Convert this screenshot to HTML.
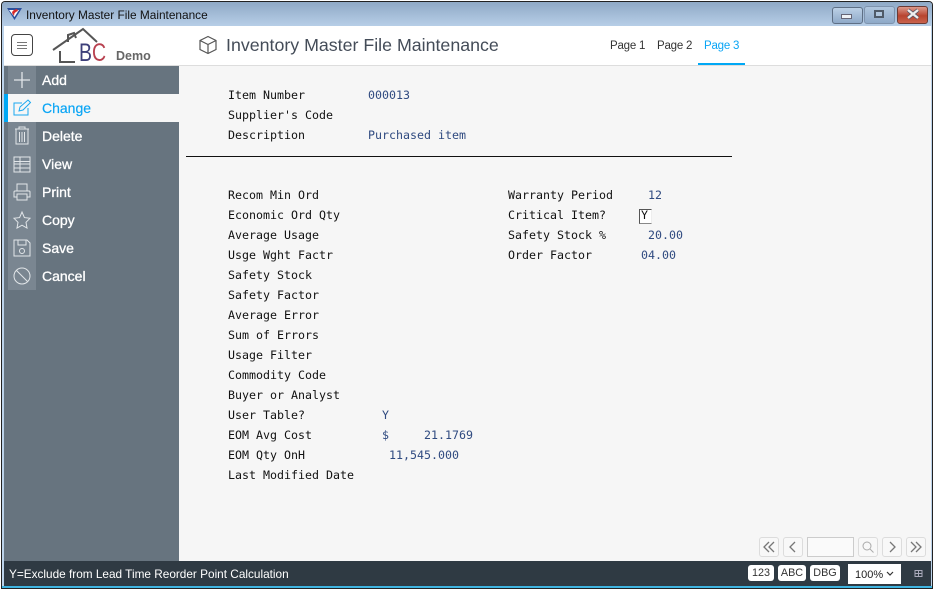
<!DOCTYPE html>
<html><head><meta charset="utf-8"><style>
html,body{margin:0;padding:0;width:935px;height:591px;overflow:hidden;background:#fff}
.a{position:absolute}
#win{position:absolute;left:0;top:0;width:935px;height:591px;font-family:"Liberation Sans",sans-serif}
.m{position:absolute;font:11.63px/14px "DejaVu Sans Mono",monospace;color:#111;white-space:pre}
.v{color:#2f4a80}
.n{position:absolute;left:42px;font:14px/16px "Liberation Sans",sans-serif;color:#fff;-webkit-text-stroke:.3px #fff}
.i{position:absolute;left:11px;width:22px;height:22px;fill:none;stroke:#e2e6e9;stroke-width:1}
.t{position:absolute;top:39px;font:11.5px/14px "Liberation Sans",sans-serif;letter-spacing:-.2px;color:#333}
.b{position:absolute;top:537px;width:18px;height:18px;border:1px solid #dcdcdc;border-radius:3px;background:#f8f8f8;box-sizing:content-box}
.b svg{position:absolute;left:0;top:0;width:18px;height:18px;fill:none;stroke:#777;stroke-width:1.3}
.k{position:absolute;top:565px;height:16px;background:#fff;border-radius:3px;font:10.8px/16px "Liberation Sans",sans-serif;color:#333;text-align:center}
</style></head><body><div id="win">
<div class="a" style="left:1px;top:1px;width:932px;height:588px;background:#222;border-radius:4px 4px 0 0"></div>
<div class="a" style="left:2px;top:2px;width:930px;height:586px;background:#bcd3ea;border-radius:3px 3px 0 0"></div>
<div class="a" style="left:2px;top:2px;width:930px;height:24px;background:linear-gradient(#8fa9c6,#b7cee7);border-radius:3px 3px 0 0"></div>
<svg class="a" style="left:7px;top:7px" width="15" height="14" viewBox="0 0 15 14"><path d="M0 1H15L7.500 13Z" fill="#2a4f9c"/><path d="M2 3H12L7.500 10Z" fill="#fff"/><path d="M10 2Q5 3 5 6L7 9Q7 5 11 4Z" fill="#d62a2a"/></svg>
<div class="a" style="left:26px;top:8px;font:11.85px/15px 'Liberation Sans',sans-serif;color:#111">Inventory Master File Maintenance</div>
<div class="a" style="left:832px;top:7px;width:29px;height:15px;border:1px solid #5e6f85;border-radius:3px;background:linear-gradient(#bcd0e6,#8ea9c8)"></div>
<div class="a" style="left:841px;top:14px;width:9px;height:3px;background:#eef2f6;border:1px solid #667"></div>
<div class="a" style="left:864px;top:6px;width:29px;height:16px;border:1px solid #7e93ad;border-radius:3px;background:linear-gradient(#b0c6de,#8ea9c8)"></div>
<div class="a" style="left:874px;top:10px;width:6px;height:4px;border:2px solid #4f5a68;background:#b0c6de"></div>
<div class="a" style="left:897px;top:6px;width:29px;height:16px;border:1px solid #6b3a34;border-radius:3px;background:linear-gradient(#dc9a8c,#b8442f 55%,#c9634d)"></div>
<svg class="a" style="left:905px;top:8px" width="16" height="12" viewBox="0 0 16 12"><path d="M3 2L13 10M13 2L3 10" stroke="#556" stroke-width="3.800"/><path d="M3 2L13 10M13 2L3 10" stroke="#eee" stroke-width="2.400"/></svg>

<div class="a" style="left:4px;top:26px;width:927px;height:39px;background:#fff;border-bottom:1px solid #ddd"></div>
<div class="a" style="left:11px;top:34px;width:20px;height:20px;border:1px solid #444;border-radius:4px;background:#fff"></div>
<div class="a" style="left:17px;top:42px;width:10px;height:1px;background:#777;box-shadow:0 3px #777,0 6px #777"></div>
<svg class="a" style="left:50px;top:26px" width="60" height="38" viewBox="0 0 60 38" fill="none"><path d="M3 24L33 3L47 16" stroke="#555" stroke-width="2"/><path d="M10 25V36H25" stroke="#555" stroke-width="2"/><path d="M18 16V9L24 7L26 12" stroke="#555" stroke-width="2"/></svg>
<div class="a" style="left:79px;top:40px;font:25px/26px 'Liberation Sans',sans-serif;color:#3d3f7a;transform:scaleX(.78);transform-origin:0 0">B<span style="color:#b8404f">C</span></div>
<div class="a" style="left:116px;top:49px;font:bold 12.5px/15px 'Liberation Sans',sans-serif;color:#666">Demo</div>
<svg class="a" style="left:198px;top:35px" width="20" height="20" viewBox="0 0 20 20" fill="none" stroke="#555" stroke-width="1.200"><path d="M10 1.500L18 5.500V14.500L10 18.500L2 14.500V5.500ZM2 5.500L10 9.500L18 5.500M10 9.500V18.500"/></svg>
<div class="a" style="left:226px;top:34px;font:17.8px/22px 'Liberation Sans',sans-serif;color:#444c58">Inventory Master File Maintenance</div>
<div class="t" style="left:610px">Page 1</div>
<div class="t" style="left:657px">Page 2</div>
<div class="t" style="left:704px;color:#0aa5f5">Page 3</div>
<div class="a" style="left:698px;top:63px;width:47px;height:2px;background:#00a8f5"></div>

<div class="a" style="left:179px;top:66px;width:752px;height:495px;background:#f6f6f6"></div>
<div class="a" style="left:4px;top:66px;width:175px;height:495px;background:#67747f"></div>
<div class="a" style="left:8px;top:66px;width:28px;height:224px;background:#7a8691"></div>
<div class="a" style="left:4px;top:94px;width:175px;height:28px;background:#f6f6f6"></div>
<div class="a" style="left:4px;top:94px;width:4px;height:28px;background:#00a8f5"></div>

<svg class="i" style="top:69px" viewBox="0 0 22 22"><path d="M11 3V19M3 11H19" stroke-width="1.300"/></svg>
<svg class="i" style="top:97px;stroke:#1ba8f0" viewBox="0 0 22 22"><path d="M17 11V18H3V6H11"/><path d="M8 14L9 10L17 3L19.500 5.500L12 13Z"/></svg>
<svg class="i" style="top:125px" viewBox="0 0 22 22"><path d="M4 4H18M8 4V2H14V4M5 4V19H17V4M8.500 7V17M11 7V17M13.500 7V17"/></svg>
<svg class="i" style="top:153px" viewBox="0 0 22 22"><path d="M3 4H19V19H3ZM3 8.500H19M3 11H19M3 15H19M9 4V19"/></svg>
<svg class="i" style="top:181px" viewBox="0 0 22 22"><path d="M6 10V3H16V10M6 16H3V11Q3 10 4 10H18Q19 10 19 11V16H16M6 13H16V19H6Z"/></svg>
<svg class="i" style="top:209px" viewBox="0 0 22 22"><path d="M11 3L13.400 8.600L19 9.300L15 13.300L16 19L11 16.200L6 19L7 13.300L3 9.300L8.600 8.600Z"/></svg>
<svg class="i" style="top:237px" viewBox="0 0 22 22"><path d="M3 3H16L19 6V19H3ZM7 3V8H15V3"/><circle cx="11" cy="14" r="2.500"/></svg>
<svg class="i" style="top:265px" viewBox="0 0 22 22"><circle cx="11" cy="11" r="8"/><path d="M5.500 5.500L16.500 16.500"/></svg>

<div class="n" style="top:72px">Add</div>
<div class="n" style="top:100px;color:#0aa5f5;-webkit-text-stroke:.2px #0aa5f5">Change</div>
<div class="n" style="top:128px">Delete</div>
<div class="n" style="top:156px">View</div>
<div class="n" style="top:184px">Print</div>
<div class="n" style="top:212px">Copy</div>
<div class="n" style="top:240px">Save</div>
<div class="n" style="top:268px">Cancel</div>

<div class="m" style="left:228px;top:88px">Item Number</div><div class="m v" style="left:368px;top:88px">000013</div>
<div class="m" style="left:228px;top:108px">Supplier's Code</div>
<div class="m" style="left:228px;top:128px">Description</div><div class="m v" style="left:368px;top:128px">Purchased item</div>
<div class="a" style="left:186px;top:156px;width:546px;height:1px;background:#111"></div>
<div class="m" style="left:228px;top:188px">Recom Min Ord</div>
<div class="m" style="left:228px;top:208px">Economic Ord Qty</div>
<div class="m" style="left:228px;top:228px">Average Usage</div>
<div class="m" style="left:228px;top:248px">Usge Wght Factr</div>
<div class="m" style="left:228px;top:268px">Safety Stock</div>
<div class="m" style="left:228px;top:288px">Safety Factor</div>
<div class="m" style="left:228px;top:308px">Average Error</div>
<div class="m" style="left:228px;top:328px">Sum of Errors</div>
<div class="m" style="left:228px;top:348px">Usage Filter</div>
<div class="m" style="left:228px;top:368px">Commodity Code</div>
<div class="m" style="left:228px;top:388px">Buyer or Analyst</div>
<div class="m" style="left:228px;top:408px">User Table?</div><div class="m v" style="left:382px;top:408px">Y</div>
<div class="m" style="left:228px;top:428px">EOM Avg Cost</div><div class="m v" style="left:382px;top:428px">$</div><div class="m v" style="left:424px;top:428px">21.1769</div>
<div class="m" style="left:228px;top:448px">EOM Qty OnH</div><div class="m v" style="left:389px;top:448px">11,545.000</div>
<div class="m" style="left:228px;top:468px">Last Modified Date</div>
<div class="m" style="left:508px;top:188px">Warranty Period</div><div class="m v" style="left:648px;top:188px">12</div>
<div class="m" style="left:508px;top:208px">Critical Item?</div>
<div class="a" style="left:639px;top:209px;width:11px;height:13px;border:1px solid #555;border-right-color:#eee;border-bottom-color:#888;background:#fff"></div>
<div class="m" style="left:641px;top:208px">Y</div>
<div class="m" style="left:508px;top:228px">Safety Stock %</div><div class="m v" style="left:648px;top:228px">20.00</div>
<div class="m" style="left:508px;top:248px">Order Factor</div><div class="m v" style="left:641px;top:248px">04.00</div>

<div class="b" style="left:759px"><svg viewBox="0 0 18 18"><path d="M9 4L4 9L9 14M14 4L9 9L14 14"/></svg></div>
<div class="b" style="left:783px"><svg viewBox="0 0 18 18"><path d="M11 4L6 9L11 14"/></svg></div>
<div class="a" style="left:807px;top:537px;width:45px;height:18px;border:1px solid #ccc;background:#fafafa"></div>
<div class="b" style="left:858px"><svg viewBox="0 0 18 18" style="stroke:#aaa;stroke-width:1"><circle cx="8" cy="8" r="4"/><path d="M11 11L14.500 14.500"/></svg></div>
<div class="b" style="left:882px"><svg viewBox="0 0 18 18"><path d="M7 4L12 9L7 14"/></svg></div>
<div class="b" style="left:906px"><svg viewBox="0 0 18 18"><path d="M4 4L9 9L4 14M9 4L14 9L9 14"/></svg></div>

<div class="a" style="left:4px;top:561px;width:927px;height:25px;background:#2f3a43"></div>
<div class="a" style="left:2px;top:586px;width:930px;height:2px;background:#3fb4e0"></div>
<div class="a" style="left:9px;top:567px;font:11.8px/15px 'Liberation Sans',sans-serif;color:#fff">Y=Exclude from Lead Time Reorder Point Calculation</div>
<div class="k" style="left:748px;width:26px">123</div>
<div class="k" style="left:778px;width:28px">ABC</div>
<div class="k" style="left:810px;width:30px">DBG</div>
<div class="a" style="left:848px;top:564px;width:53px;height:20px;background:#fff;font:11px/22px 'Liberation Sans',sans-serif;color:#222;text-indent:7px">100%</div>
<svg class="a" style="left:886px;top:571px" width="8" height="6" viewBox="0 0 8 6" fill="none" stroke="#333" stroke-width="1.200"><path d="M1 1L4 4L7 1"/></svg>
<svg class="a" style="left:914px;top:569px" width="9" height="9" viewBox="0 0 9 9" fill="none" stroke="#aab" stroke-width="1"><path d="M1 1.500H8V7.500H1ZM1 4.500H8M4.500 1.500V7.500"/></svg>
</div></body></html>
